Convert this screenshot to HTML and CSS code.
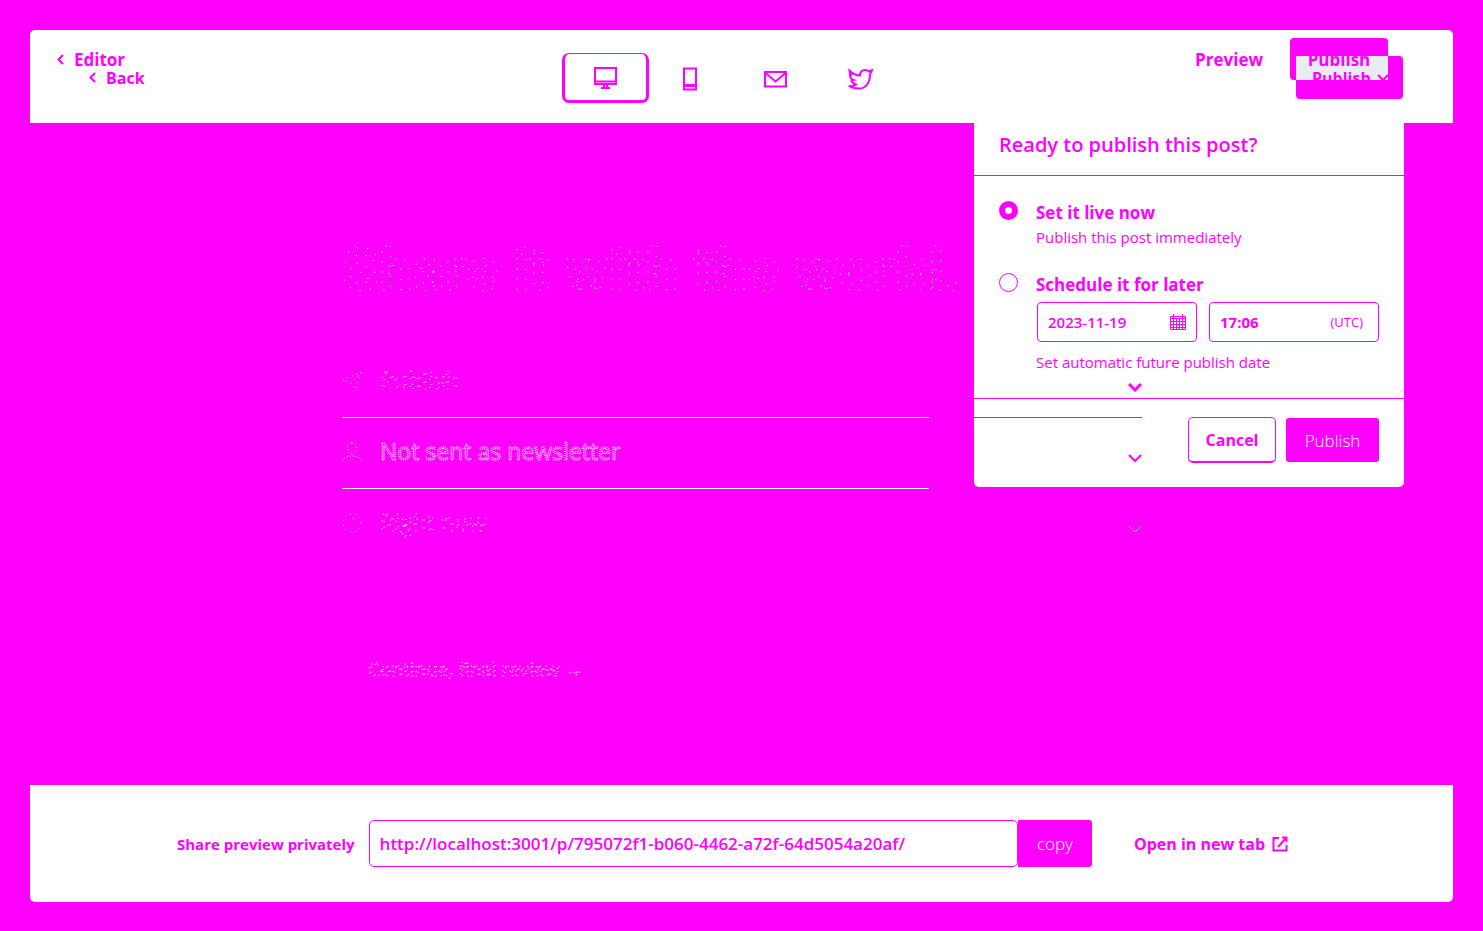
FILE: index.html
```html
<!DOCTYPE html>
<html lang="en">
<head>
<meta charset="utf-8">
<title>Publish post</title>
<link rel="stylesheet" href="styles.css">
</head>
<body>
<div class="frame">
  <header class="topbar">
    <nav class="layer layer-editor">
      <a class="back-link" href="#"><svg class="chev" viewBox="0 0 7 11"><path d="M6 1 1.500 5.500 6 10"/></svg>Editor</a>
      <div class="actions">
        <a class="preview-link" href="#">Preview</a>
        <button class="solid solid-a"><span>Publish</span></button>
      </div>
    </nav>
    <nav class="layer layer-back">
      <a class="back-link" href="#"><svg class="chev" viewBox="0 0 7 11"><path d="M6 1 1.500 5.500 6 10"/></svg>Back</a>
      <button class="solid solid-b"><i class="overlap"></i><span>Publish</span><svg class="caret" viewBox="0 0 12 8"><path d="m1 1 5 5 5-5"/></svg></button>
    </nav>
    <div class="tabs">
      <button class="tab active" aria-label="Desktop"><svg width="24" height="24" viewBox="0 0 24 24"><path d="M1 2h21v16H1zM1 15.500h21M7 22h9M10 18v3m3-3v3"/></svg></button>
      <button class="tab" aria-label="Mobile"><svg width="24" height="24" viewBox="0 0 24 24"><path d="M6 1.500h12v21H6z"/><path d="M6 18.500h12" stroke-width="3"/></svg></button>
      <button class="tab" aria-label="Email"><svg width="24" height="24" viewBox="0 0 24 24"><path d="M2 5h21v14.500H2zM2.500 6l10 8.500L22.500 6"/></svg></button>
      <button class="tab" aria-label="Social"><svg width="26" height="24" viewBox="0 0 26 24"><path d="M2.500 3.500c3 3 6 5 10.500 5C13 4.500 15 3 18 3c2 0 3 .5 4 1.500L25 3l-2 4.500c0 8-4 14-11 14-3.500 0-7-.5-10-2.500 3.500.5 5.500 0 7-1.500-3-.8-4-2-4.500-4l2-.5C4 12 3 10 3 8l1.500.5C3 7 2.500 5.500 2.500 3.500z"/></svg></button>
    </div>
  </header>

  <main class="stage">
    <div class="column">
      <h1 class="title"><svg class="ghost ghost-title" width="100%" height="80" role="img"><text x="0" y="60">Share it with the world.</text></svg></h1>
      <button class="row">
        <svg class="row-icon faint" viewBox="0 0 20 20"><path d="M1 9 19 1l-5 17-5-6zM19 1 9 12"/></svg>
        <svg class="ghost ghost-row" height="32"><text x="0" y="24">Publish</text></svg>
        <svg class="row-caret" viewBox="0 0 14 9"><path d="m1 1 6 6 6-6"/></svg>
      </button>
      <button class="row">
        <svg class="row-icon" viewBox="0 0 20 20"><path d="M10 1c-4 0-5 3-4.500 6S8 12 10 12s4-2 4.500-5S14 1 10 1M1 19c0-4 4-4 7-5h4c3 1 7 1 7 5"/></svg>
        <svg class="ghost ghost-row strong" height="32"><text x="0" y="24">Not sent as newsletter</text></svg>
        <svg class="row-caret thin" viewBox="0 0 14 9"><path d="m1 1 6 6 6-6"/></svg>
      </button>
      <button class="row">
        <svg class="row-icon faint" viewBox="0 0 20 20"><circle cx="10" cy="10" r="9"/><path d="M11 5v4"/></svg>
        <svg class="ghost ghost-row" height="32"><text x="0" y="24">Right now</text></svg>
        <svg class="row-caret light" viewBox="0 0 14 9"><path d="m1 1 6 6 6-6"/></svg>
      </button>
      <button class="continue"><svg class="ghost ghost-continue" width="224" height="32"><text x="0" y="23">Continue, final review →</text></svg></button>
    </div>
  </main>

  <footer class="share">
    <label class="share-label" for="url">Share preview privately</label>
    <input class="url" id="url" value="http://localhost:3001/p/795072f1-b060-4462-a72f-64d5054a20af/">
    <button class="copy">copy</button>
    <a class="newtab" href="#">Open in new tab<svg viewBox="0 0 16 16"><path d="M7 2H1.500v12.500h13V9M10 1.500h4.500V6M14 2 6 11"/></svg></a>
  </footer>

  <section class="panel">
    <h2 class="panel-title">Ready to publish this post?</h2>
    <div class="panel-body">
      <div class="option">
        <input type="radio" name="when" id="now" checked>
        <div class="option-text">
          <label for="now">Set it live now</label>
          <p>Publish this post immediately</p>
        </div>
      </div>
      <div class="option">
        <input type="radio" name="when" id="later">
        <div class="option-text">
          <label for="later">Schedule it for later</label>
          <div class="fields">
            <div class="field date"><input aria-label="Date" value="2023-11-19"><svg viewBox="0 0 16 16"><path d="M.5 2.500h15v13H.5zM0 4.500h16M0 7.500h16M0 10.500h16M0 13.500h16M3.500 5v10M6.500 5v10M9.500 5v10M12.500 5v10M3.500 0v4M12.500 0v4"/></svg></div>
            <div class="field time"><input aria-label="Time" value="17:06"><span>(UTC)</span></div>
          </div>
          <p>Set automatic future publish date</p>
        </div>
      </div>
    </div>
    <div class="panel-foot">
      <button class="cancel">Cancel</button>
      <button class="confirm">Publish</button>
    </div>
  </section>
</div>
</body>
</html>
```

FILE: styles.css
```css
* { box-sizing: border-box; }
body {
  margin: 0;
  min-height: 100vh;
  padding: 30px 30px 29px;
  display: flex;
  background: #f0f;
  color: #f0f;
  font-family: "Open Sans", "Noto Sans", sans-serif;
  font-size: 16px;
}
button, input { font: inherit; color: inherit; border: 0; background: none; padding: 0; margin: 0; }
a { color: inherit; text-decoration: none; }
h1, h2, p { margin: 0; }
svg { fill: none; stroke: #f0f; flex: none; }

.frame { position: relative; flex: 1; display: flex; flex-direction: column; }
.topbar { position: relative; height: 93px; background: #fff; border-radius: 5px 5px 0 0; display: flex; justify-content: center; padding: 23px 19px 0 0; }
.layer { position: absolute; display: flex; justify-content: space-between; align-items: center; font-weight: 700; font-size: 17px; }
.layer-editor { inset: 8px 65px auto 27px; height: 42px; }
.layer-back { inset: 26px 50px auto 59px; height: 43px; font-size: 16px; }
.back-link { display: flex; align-items: center; gap: 10px; }
.chev { width: 7px; height: 11px; stroke-width: 2; }
.actions { display: flex; align-items: center; gap: 27px; }
.solid { display: flex; align-items: center; justify-content: center; background: #f0f; border-radius: 4px; font-weight: 700; }
.solid span { position: relative; z-index: 2; }
.solid-a { width: 98px; height: 42px; }
.solid-b { position: relative; width: 107px; height: 43px; gap: 6px; padding-left: 2px; }
.overlap { position: absolute; left: 0; top: 0; width: 92px; height: 24px; background: #e9edf0; }
.caret { position: relative; z-index: 2; width: 12px; height: 8px; stroke-width: 2; }
.tabs { display: flex; }
.tab { width: 85px; height: 50px; padding-top: 2px; display: grid; place-items: center; border-radius: 7px; }
.tab svg { stroke-width: 2; }
.tab.active { width: 87px; margin-right: -2px; border: 3px solid #f0f; border-top-width: 1px; }

.stage { flex: 1; display: flex; justify-content: center; }
.column { width: 800px; padding-top: 107px; }
.ghost { display: block; font-family: "Open Sans", "Noto Sans", sans-serif; stroke: #fff; fill: #f0f; stroke-width: 1; overflow: visible; }
.title { line-height: 80px; margin-bottom: 35px; }
.ghost-title { font-family: Roboto, "Open Sans", sans-serif; font-size: 60px; font-weight: 700; stroke-dasharray: 1 9; }
.row { position: relative; width: 100%; height: 71px; display: flex; align-items: center; text-align: left; }
.row:not(:nth-of-type(3))::after { content: ""; position: absolute; z-index: 3; left: 0; right: 0; bottom: -2px; height: 1px; background: linear-gradient(90deg, #fff 587px, #f0f 587px); }
.row-icon { width: 20px; height: 20px; stroke: #fff; stroke-width: 1; stroke-dasharray: 1 2; }
.row-icon.faint { stroke-dasharray: 1 4; }
.ghost-row { flex: 1; margin-left: 18px; font-size: 23px; font-weight: 400; stroke-dasharray: 1 7; stroke-width: 1; }
.ghost-row.strong { stroke-dasharray: 1 1; }
.row-caret { position: relative; z-index: 3; top: 7px; width: 14px; height: 9px; stroke-width: 3; }
.row-caret.thin { stroke-width: 2; }
.row-caret.light { stroke: #fff; stroke-width: 1; stroke-dasharray: 2 1; }
.continue { display: block; margin: 95px 0 0 26px; }
.ghost-continue { font-size: 19px; stroke-dasharray: 1 4; }

.share { height: 117px; background: #fff; border-radius: 0 0 5px 5px; display: flex; align-items: center; padding: 0 165px 0 147px; font-weight: 700; }
.share-label { margin-right: 14px; font-size: 15px; }
.url { flex: 1; min-width: 0; height: 47px; border: 1px solid #f0f; border-radius: 5px; padding: 0 10px; font-size: 17px; font-weight: 600; }
.copy { width: 74px; height: 47px; background: #f0f; color: #fff; font-size: 17px; font-weight: 300; border-radius: 0 3px 3px 0; margin-right: 42px; }
.newtab { display: flex; align-items: center; gap: 7px; font-size: 16px; }
.newtab svg { width: 16px; height: 16px; stroke-width: 2; }

.panel { position: absolute; z-index: 1; top: 93px; right: 49px; width: 430px; background: #fff; border-radius: 0 0 5px 5px; }
.panel-title { height: 53px; padding: 0 25px; border-bottom: 1px solid #f0f; font-size: 20px; line-height: 44px; font-weight: 600; }
.panel-body { padding: 24px 25px 24px; display: grid; gap: 23px; border-bottom: 1px solid #f0f; }
.option { display: flex; gap: 18px; }
.option > input { appearance: none; width: 19px; height: 19px; border: 1px solid #f0f; border-radius: 50%; margin-top: 1px; flex: none; }
.option > input:checked { border-width: 6px; }
.option-text { flex: 1; min-width: 0; }
.option-text label { display: block; font-weight: 700; font-size: 17px; line-height: 26px; }
.option-text p { font-size: 15px; line-height: 23px; }
.fields { display: flex; gap: 12px; margin: 4px 0 9px 1px; }
.field { height: 40px; display: flex; align-items: center; border: 1px solid #f0f; border-radius: 4px; padding: 0 10px; font-size: 15px; font-weight: 600; }
.field input { flex: 1; min-width: 0; width: 0; font-weight: 600; }
.date { width: 160px; }
.date svg { width: 16px; height: 16px; }
.time { flex: 1; padding-right: 15px; }
.time input { font-weight: 700; }
.time span { font-size: 13px; font-weight: 400; }
.panel-foot { padding: 18px 25px 24px; display: flex; justify-content: flex-end; gap: 10px; align-items: center; }
.cancel { width: 88px; height: 46px; border: 1px solid #f0f; border-bottom-width: 2px; border-radius: 5px; font-weight: 700; }
.confirm { width: 93px; height: 44px; background: #f0f; color: #fff; font-size: 17px; font-weight: 300; border-radius: 3px; }
```
